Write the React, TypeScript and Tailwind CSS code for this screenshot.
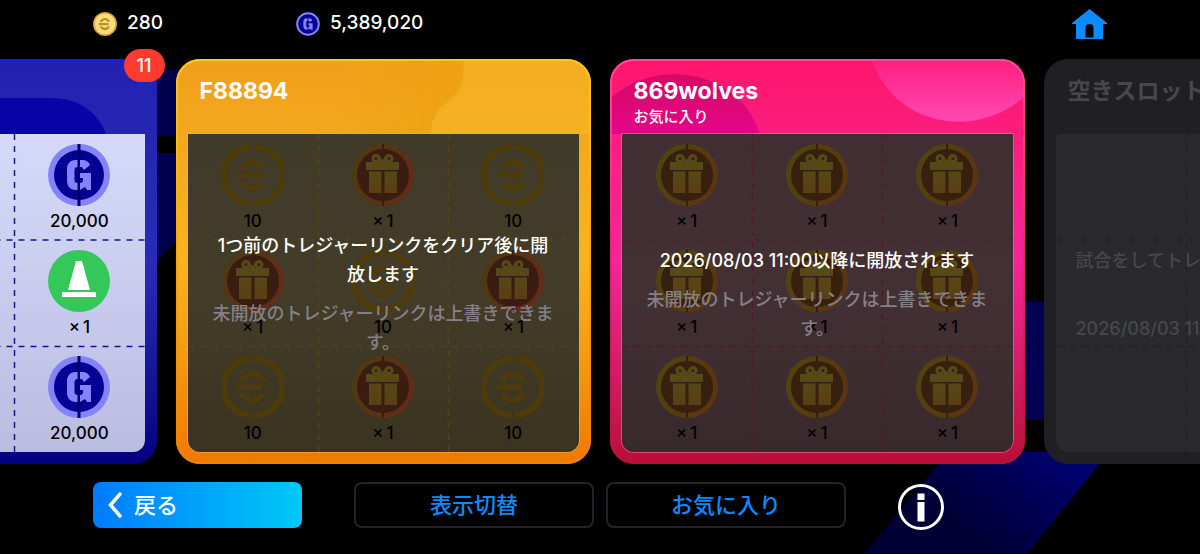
import type { ReactNode } from "react";

type RewardKind = "gp" | "coin" | "gift" | "trainer";

interface Reward {
  kind: RewardKind;
  label: string;
}

const gp: Reward = { kind: "gp", label: "20,000" };
const trainer: Reward = { kind: "trainer", label: "×\u20091" };
const coin: Reward = { kind: "coin", label: "10" };
const gift: Reward = { kind: "gift", label: "×\u20091" };

const blueRewards = [gp, trainer, gp, trainer, gp, trainer, gp, trainer, gp];
const goldRewards = [coin, gift, coin, gift, coin, gift, coin, gift, coin];
const pinkRewards = [gift, gift, gift, gift, gift, gift, gift, gift, gift];

function GpGlyph({ fill }: { fill: string }) {
  return (
    <g fill={fill}>
      <path d="M29.500 16v7c-2 0-3 1-3 3v10c0 2 1 3 3 3v7h-2c-5 0-8.500-4-8.500-9V25c0-5 3-9 8.500-9z" />
      <path d="M32 16h2c4 0 7 2 8 5l-6 5-2-3h-2z" />
      <path d="M32 29h11v17h-4l-2-3-5 3v-7c2 0 3-1 3-3v-2h-3z" />
    </g>
  );
}

function CoinGlyph({ fill }: { fill: string }) {
  return (
    <g fill={fill}>
      <path d="M17 25c3-6 8-9.500 14-9.500S41 19 44 25h-7c-3-6-10-6-13 0z" />
      <path d="M15 28.500h25v5.500H15z" />
      <path d="M17 37.500h7c3 5 10 5 13 0h7c-3 6-7 9.500-13 9.500s-11-3.500-14-9.500z" />
    </g>
  );
}

function GpIcon() {
  return (
    <svg viewBox="0 0 62 62" className="size-[62px]" aria-hidden="true">
      <circle cx="31" cy="31" r="31" fill="#8583fb" />
      <circle cx="31" cy="31" r="25" fill="#050094" />
      <path d="M29.500 0h3v62h-3z" fill="#050066" />
      <GpGlyph fill="#8583fb" />
    </svg>
  );
}

function CoinIcon() {
  return (
    <svg viewBox="0 0 62 62" className="size-[62px]" aria-hidden="true">
      <path d="M29.500 3a28 28 0 0 0 0 56M32.500 3a28 28 0 0 1 0 56" fill="none" stroke="#4d3c0a" strokeWidth="6" />
      <CoinGlyph fill="#4d3c0a" />
    </svg>
  );
}

function TrainerIcon() {
  return (
    <svg viewBox="0 0 62 62" className="size-[62px]" aria-hidden="true">
      <circle cx="31" cy="31" r="31" fill="#34c759" />
      <path d="M28 11h6l8 29H20zM14 42h34v5H14z" fill="#fff" />
    </svg>
  );
}

function GiftIcon({ tone }: { tone: "red" | "amber" }) {
  const ring = tone === "red" ? ["#4d3a12", "#642a1b"] : ["#4f450d", "#5c3312"];
  const core = tone === "red" ? "#3b1c10" : "#38200f";
  return (
    <svg viewBox="0 0 62 62" className="size-[62px]" aria-hidden="true">
      <defs>
        <linearGradient id={`ring-${tone}`} x1="0" y1="0.300" x2="1" y2="0.700">
          <stop offset="0" stopColor={ring[0]} />
          <stop offset="1" stopColor={ring[1]} />
        </linearGradient>
        <linearGradient id={`box-${tone}`} x1="0" y1="0" x2="0" y2="1">
          <stop offset="0" stopColor="#564a18" />
          <stop offset="1" stopColor="#5a3f14" />
        </linearGradient>
      </defs>
      <circle cx="31" cy="31" r="31" fill={`url(#ring-${tone})`} />
      <circle cx="31" cy="31" r="26" fill={core} />
      <path d="M30 0h2v62h-2z" fill={core} />
      <path d="M14 18h33v8H14zM17 27.500h12.500V49H17zM32.500 27.500H45V49H32.500z" fill={`url(#box-${tone})`} />
      <g fill="none" stroke="#564a18" strokeWidth="3">
        <circle cx="24" cy="14.500" r="3" />
        <circle cx="37" cy="14.500" r="3" />
        <path d="M26 12l4.500 7L35 12" />
      </g>
    </svg>
  );
}

function RewardIcon({ kind, tone }: { kind: RewardKind; tone: "red" | "amber" }) {
  if (kind === "gp") return <GpIcon />;
  if (kind === "coin") return <CoinIcon />;
  if (kind === "trainer") return <TrainerIcon />;
  return <GiftIcon tone={tone} />;
}

function GridLines({ stroke }: { stroke: string }) {
  return (
    <svg viewBox="0 0 390 318" className="absolute inset-0 size-full" aria-hidden="true">
      <path
        d="M0 106h390M0 212.500h390M130 0v318M260 0v318"
        fill="none"
        stroke={stroke}
        strokeWidth="1.500"
        strokeDasharray="6 6"
      />
    </svg>
  );
}

interface CardProps {
  title?: string;
  subtitle?: string;
  titleColor?: string;
  rewards?: Reward[];
  tone?: "red" | "amber";
  frame: string;
  panel: string;
  line: string;
  art?: ReactNode;
  badge?: string;
  children?: ReactNode;
}

function LinkCard({
  title,
  subtitle,
  titleColor = "text-white",
  rewards = [],
  tone = "amber",
  frame,
  panel,
  line,
  art,
  badge,
  children,
}: CardProps) {
  return (
    <section className={`relative w-[415px] shrink-0 rounded-3xl px-3 pb-3 ${frame}`}>
      {art}
      {badge && (
        <span className="absolute -top-[10px] -right-2 flex h-[33px] w-[41px] items-center justify-center rounded-full bg-[#ff3b30] text-lg font-medium text-white">
          {badge}
        </span>
      )}
      <header className={`relative h-[75px] px-3 pt-[18px] whitespace-nowrap ${titleColor}`}>
        {title && <h2 className="text-[23px] leading-7 font-bold">{title}</h2>}
        {subtitle && <p className="text-[15px] leading-6 font-medium">{subtitle}</p>}
      </header>
      <div className={`relative h-[318px] overflow-hidden rounded-b-xl ${panel}`}>
        <GridLines stroke={line} />
        <ul className="relative grid grid-cols-3 grid-rows-3">
          {rewards.map((reward, i) => (
            <li key={i} className="flex h-[106px] flex-col items-center pt-[10px] text-[17px] leading-[30px] font-medium text-black">
              <RewardIcon kind={reward.kind} tone={tone} />
              <span>{reward.label}</span>
            </li>
          ))}
        </ul>
        {children}
      </div>
    </section>
  );
}

function LockedMessage({ children }: { children: ReactNode }) {
  return (
    <div className="absolute inset-0 flex flex-col items-center justify-center gap-[10px] pt-[2px] text-center text-lg leading-[29px] font-medium">
      <p className="w-[346px] text-white">{children}</p>
      <p className="w-[346px] text-[#858087]">未開放のトレジャーリンクは上書きできます。</p>
    </div>
  );
}

function Backdrop() {
  return (
    <svg
      viewBox="0 0 1200 554"
      preserveAspectRatio="xMidYMin slice"
      className="absolute inset-0 size-full"
      aria-hidden="true"
    >
      <defs>
        <linearGradient id="beam" x1="0" y1="0.500" x2="1" y2="0">
          <stop offset="0.200" stopColor="#000034" />
          <stop offset="0.800" stopColor="#00006c" />
        </linearGradient>
      </defs>
      <path d="M100 70h300v66H100zM100 153h160l-103 108h-57z" fill="#00004c" />
      <path d="M980 302h120v118H980z" fill="#000052" />
      <path d="M948 452h161l-82 102H864z" fill="url(#beam)" />
    </svg>
  );
}

export default function App() {
  return (
    <main className="relative flex min-h-screen flex-col overflow-hidden bg-black font-[Inter,'Noto_Sans_CJK_JP',sans-serif]">
      <Backdrop />

      <header className="relative flex h-[59px] px-[93px] pb-3 text-[19px] font-medium text-white">
        <div className="flex w-[203px] items-center gap-[10px]">
          <svg viewBox="0 0 62 62" className="size-6" aria-hidden="true">
            <circle cx="31" cy="31" r="31" fill="#d3a032" />
            <circle cx="31" cy="31" r="27" fill="#f9dc7c" />
            <CoinGlyph fill="#bd8b22" />
          </svg>
          <span>280</span>
        </div>
        <div className="flex items-center gap-[10px]">
          <svg viewBox="0 0 62 62" className="size-6" aria-hidden="true">
            <circle cx="31" cy="31" r="28" fill="#050094" stroke="#8583fb" strokeWidth="5" />
            <GpGlyph fill="#8583fb" />
          </svg>
          <span>5,389,020</span>
        </div>
        <button type="button" aria-label="ホーム" className="ml-auto">
          <svg viewBox="0 0 35 30" className="h-[30px] w-[35px]" aria-hidden="true">
            <path
              d="M17.500 0 35 14v1h-4v14q0 1-1 1H5q-1 0-1-1V15H0v-1zM13.500 28.500h8V19a4 4 0 0 0-8 0z"
              fill="#0a8cff"
              fillRule="evenodd"
            />
          </svg>
        </button>
      </header>

      <div className="relative flex justify-center gap-[19px]">
        <LinkCard
          rewards={blueRewards}
          frame="bg-linear-to-b from-[#2222b2] via-[#2a2ab8] to-[#050080]"
          panel="bg-linear-to-b from-[#d6dafa] to-[#babde0]"
          line="#1a1490"
          badge="11"
          art={
            <svg viewBox="0 0 415 405" className="absolute inset-0 size-full" aria-hidden="true">
              <path d="M180 39h130c28 0 46 15 54 36H180z" fill="#0805a8" />
              <path d="M20 1h375" stroke="#1a1ae6" strokeWidth="2" />
            </svg>
          }
        />

        <LinkCard
          title="F88894"
          rewards={goldRewards}
          tone="red"
          frame="bg-linear-to-b from-[#f0a01c] via-[#f8b41e] to-[#f07800]"
          panel="bg-linear-to-b from-[#403a28] via-[#423c29] to-[#3a3320] ring-1 ring-[#e8b050]/60"
          line="#574414"
          art={
            <svg viewBox="0 0 415 405" className="absolute inset-0 size-full" aria-hidden="true">
              <defs>
                <linearGradient id="wave" x1="0" y1="0" x2="1" y2="0">
                  <stop offset="0" stopColor="#eda211" stopOpacity="0" />
                  <stop offset="1" stopColor="#eda211" />
                </linearGradient>
                <linearGradient id="goldEdge" x1="0" y1="0" x2="0" y2="1">
                  <stop offset="0" stopColor="#ffc81c" />
                  <stop offset="1" stopColor="#ee8200" />
                </linearGradient>
              </defs>
              <path d="M160 2h127c2 16-1 28-12 38-11 9-20 16-20 35H160z" fill="url(#wave)" />
              <path d="M287 2h104c14 1 22 10 22 22v51H255c0-19 9-26 20-35 11-10 14-22 12-38z" fill="#f6bc26" fillOpacity="0.500" />
              <rect x="1" y="1" width="413" height="403" rx="23" fill="none" stroke="url(#goldEdge)" strokeWidth="2" />
            </svg>
          }
        >
          <LockedMessage>1つ前のトレジャーリンクをクリア後に開放します</LockedMessage>
        </LinkCard>

        <LinkCard
          title="869wolves"
          subtitle="お気に入り"
          rewards={pinkRewards}
          frame="bg-linear-to-b from-[#ff146c] via-[#f5249a] to-[#b80e38]"
          panel="bg-linear-to-b from-[#402e32] via-[#423035] to-[#38292c] ring-1 ring-[#f070a0]/60"
          line="#54182e"
          art={
            <svg viewBox="0 0 415 405" className="absolute inset-0 size-full" aria-hidden="true">
              <defs>
                <linearGradient id="orb" x1="0" y1="0" x2="0" y2="1">
                  <stop offset="0" stopColor="#ff2080" />
                  <stop offset="1" stopColor="#ff48b4" />
                </linearGradient>
                <linearGradient id="shade" x1="0" y1="0" x2="0" y2="1">
                  <stop offset="0" stopColor="#d80864" />
                  <stop offset="1" stopColor="#e40688" />
                </linearGradient>
                <linearGradient id="pinkEdge" x1="0" y1="0" x2="0" y2="1">
                  <stop offset="0" stopColor="#ff4a9c" />
                  <stop offset="1" stopColor="#b80e38" />
                </linearGradient>
              </defs>
              <path d="M2 38c42-38 126-30 148 37H2z" fill="url(#shade)" />
              <path d="M262 2h126c15 0 25 9 25 22v15c-50 42-128 27-151-37z" fill="url(#orb)" />
              <rect x="1" y="1" width="413" height="403" rx="23" fill="none" stroke="url(#pinkEdge)" strokeWidth="2" />
            </svg>
          }
        >
          <LockedMessage>2026/08/03 11:00以降に開放されます</LockedMessage>
        </LinkCard>

        <LinkCard
          title="空きスロット"
          titleColor="text-[#47474c]"
          frame="bg-[#1f1f24]"
          panel="rounded-t-sm bg-[#29292e]"
          line="#222226"
        >
          <div className="absolute inset-0 flex flex-col justify-center gap-[39px] px-5 pt-[2px] text-lg leading-[29px] font-medium whitespace-nowrap text-[#47474c]">
            <p>試合をしてトレ</p>
            <p>2026/08/03 11:00</p>
          </div>
        </LinkCard>
      </div>

      <footer className="relative flex items-start pt-[18px] pl-[93px]">
        <button
          type="button"
          className="mr-[52px] flex h-[46px] w-[209px] items-center gap-3 rounded-lg bg-linear-to-r from-[#007aff] to-[#00c8f5] pl-[15px] text-[22px] font-medium text-white"
        >
          <svg viewBox="0 0 14 26" className="h-[26px] w-[14px]" aria-hidden="true">
            <path d="M12 2 2.500 13 12 24" fill="none" stroke="#fff" strokeWidth="3.500" strokeLinecap="round" />
          </svg>
          戻る
        </button>
        <button type="button" className="mr-3 h-[46px] w-[240px] rounded-lg border-2 border-[#242427] text-[22px] leading-6 font-medium text-[#0a8cff]">
          表示切替
        </button>
        <button type="button" className="mr-[52px] h-[46px] w-[240px] rounded-lg border-2 border-[#242427] text-[22px] leading-6 font-medium text-[#0a8cff]">
          お気に入り
        </button>
        <button type="button" aria-label="情報" className="mt-[2px]">
          <svg viewBox="0 0 46 46" className="size-[46px]" aria-hidden="true">
            <circle cx="23" cy="23" r="21.500" fill="none" stroke="#fff" strokeWidth="3" />
            <path d="M19.500 9.500h7V16h-7zM19.500 18h7v19.500h-7z" fill="#fff" />
          </svg>
        </button>
      </footer>
    </main>
  );
}
